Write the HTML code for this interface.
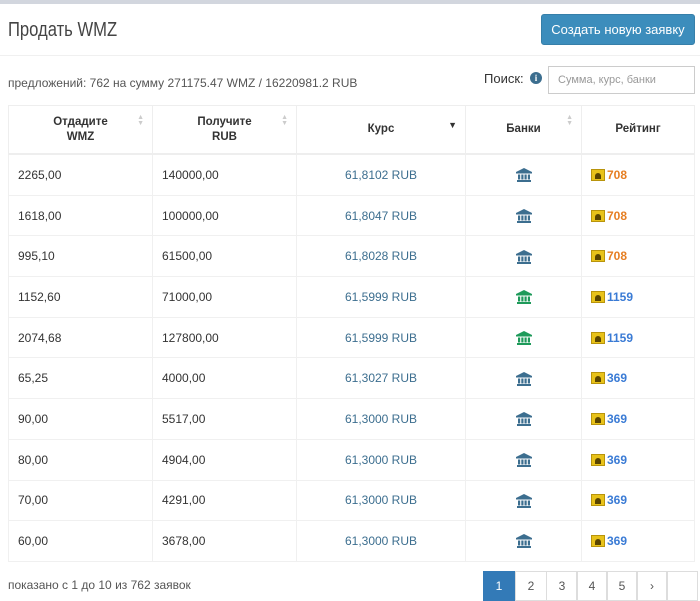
<!DOCTYPE html>
<html><head><meta charset="utf-8"><style>
body{margin:0;width:700px;height:586px;overflow:hidden;background:#fff;font-family:"Liberation Sans",sans-serif;color:#333;position:relative}
.top{position:absolute;left:0;top:0;width:700px;height:4px;background:#d2d6de}
.title{position:absolute;left:8px;top:19px;font-size:20px;color:#444;transform:scaleX(0.83);transform-origin:0 0}
.btn{position:absolute;left:541px;top:14px;width:154px;height:31px;background:#3c8dbc;border:1px solid #367fa9;border-radius:3px;color:#fff;font-size:13px;line-height:30px;text-align:center;box-sizing:border-box}
.sep{position:absolute;left:0;top:55px;width:700px;height:1px;background:#f0f0f0}
.info{position:absolute;left:8px;top:76px;font-size:12px;color:#555}
.sl{position:absolute;left:484px;top:71px;font-size:13px;color:#333}
.ic{position:absolute;left:530px;top:72px;width:12px;height:12px;border-radius:50%;background:#3c6e8f;color:#fff;font-size:9px;font-weight:bold;text-align:center;line-height:12px;font-family:"Liberation Serif",serif}
.inp{position:absolute;left:548px;top:66px;width:147px;height:28px;border:1px solid #ccc;box-sizing:border-box;font-size:11px;color:#999;padding:7px 9px}
table{position:absolute;left:8px;top:105px;width:687px;border-collapse:collapse;font-size:12px;table-layout:fixed}
th{height:47px;border:1px solid #eee;border-bottom:2px solid #eee;font-weight:bold;font-size:11.5px;text-align:center;position:relative;color:#333;padding:0;line-height:15px}
td{height:39.7px;border:1px solid #f0f0f0;padding:0 0 0 9px}
td.c{text-align:center;padding:0;color:#3c6e8f}
.s{position:absolute;right:8px;top:9px;color:#ccc;font-size:7px;line-height:6px}
.r{font-weight:bold}
.o{color:#e67e22}.b{color:#3a7bd5}
.lock{display:inline-block;width:14px;height:12px;background:#e8c21a;border:1px solid #b8940c;vertical-align:-2px;margin-right:2px;box-sizing:border-box;position:relative}
.lock:after{content:"";position:absolute;left:3px;top:3px;width:6px;height:6px;background:#5a4500;border-radius:3px 3px 0 0}
.pg{position:absolute;top:571px;height:30px;border:1px solid #ddd;width:32px;box-sizing:border-box;text-align:center;line-height:28px;font-size:12px;color:#555}
.foot{position:absolute;left:8px;top:578px;font-size:12px;color:#555}
svg{vertical-align:middle}
</style></head><body>
<svg width="0" height="0" style="position:absolute"><defs><symbol id="bk" viewBox="0 0 16 14"><path d="M8 0L0 4v1.5h16V4z M1 12h14v2H1z M2 6.5h2.2v5H2z M5.3 6.5h2.2v5H5.3z M8.5 6.5h2.2v5H8.5z M11.8 6.5H14v5h-2.2z" fill="currentColor"/></symbol></defs></svg>
<div class="top"></div>
<div class="title">Продать WMZ</div>
<div class="btn">Создать новую заявку</div>
<div class="sep"></div>
<div class="info">предложений: 762 на сумму 271175.47 WMZ / 16220981.2 RUB</div>
<div class="sl">Поиск:</div><div class="ic">i</div>
<div class="inp">Сумма, курс, банки</div>
<table>
<colgroup><col style="width:144px"><col style="width:144px"><col style="width:169px"><col style="width:116px"><col></colgroup>
<tr><th>Отдадите<br>WMZ<span class="s">▲<br>▼</span></th><th>Получите<br>RUB<span class="s">▲<br>▼</span></th><th>Курс<span class="s" style="color:#333;top:16px;font-size:9px">▼</span></th><th>Банки<span class="s">▲<br>▼</span></th><th>Рейтинг</th></tr>
<tr><td>2265,00</td><td>140000,00</td><td class="c">61,8102 RUB</td><td class="c"><svg width="16" height="14"><use href="#bk"/></svg></td><td><span class="lock"></span><span class="r o">708</span></td></tr>
<tr><td>1618,00</td><td>100000,00</td><td class="c">61,8047 RUB</td><td class="c"><svg width="16" height="14"><use href="#bk"/></svg></td><td><span class="lock"></span><span class="r o">708</span></td></tr>
<tr><td>995,10</td><td>61500,00</td><td class="c">61,8028 RUB</td><td class="c"><svg width="16" height="14"><use href="#bk"/></svg></td><td><span class="lock"></span><span class="r o">708</span></td></tr>
<tr><td>1152,60</td><td>71000,00</td><td class="c">61,5999 RUB</td><td class="c" style="color:#1e9a5a"><svg width="16" height="14"><use href="#bk"/></svg></td><td><span class="lock"></span><span class="r b">1159</span></td></tr>
<tr><td>2074,68</td><td>127800,00</td><td class="c">61,5999 RUB</td><td class="c" style="color:#1e9a5a"><svg width="16" height="14"><use href="#bk"/></svg></td><td><span class="lock"></span><span class="r b">1159</span></td></tr>
<tr><td>65,25</td><td>4000,00</td><td class="c">61,3027 RUB</td><td class="c"><svg width="16" height="14"><use href="#bk"/></svg></td><td><span class="lock"></span><span class="r b">369</span></td></tr>
<tr><td>90,00</td><td>5517,00</td><td class="c">61,3000 RUB</td><td class="c"><svg width="16" height="14"><use href="#bk"/></svg></td><td><span class="lock"></span><span class="r b">369</span></td></tr>
<tr><td>80,00</td><td>4904,00</td><td class="c">61,3000 RUB</td><td class="c"><svg width="16" height="14"><use href="#bk"/></svg></td><td><span class="lock"></span><span class="r b">369</span></td></tr>
<tr><td>70,00</td><td>4291,00</td><td class="c">61,3000 RUB</td><td class="c"><svg width="16" height="14"><use href="#bk"/></svg></td><td><span class="lock"></span><span class="r b">369</span></td></tr>
<tr><td>60,00</td><td>3678,00</td><td class="c">61,3000 RUB</td><td class="c"><svg width="16" height="14"><use href="#bk"/></svg></td><td><span class="lock"></span><span class="r b">369</span></td></tr>
</table>
<div class="foot">показано с 1 до 10 из 762 заявок</div>
<div class="pg" style="left:483px;background:#337ab7;color:#fff;border-color:#337ab7">1</div>
<div class="pg" style="left:515px">2</div>
<div class="pg" style="left:546px">3</div>
<div class="pg" style="left:576px">4</div>
<div class="pg" style="left:606px">5</div>
<div class="pg" style="left:636px">›</div>
<div class="pg" style="left:666px"></div>
</body></html>
